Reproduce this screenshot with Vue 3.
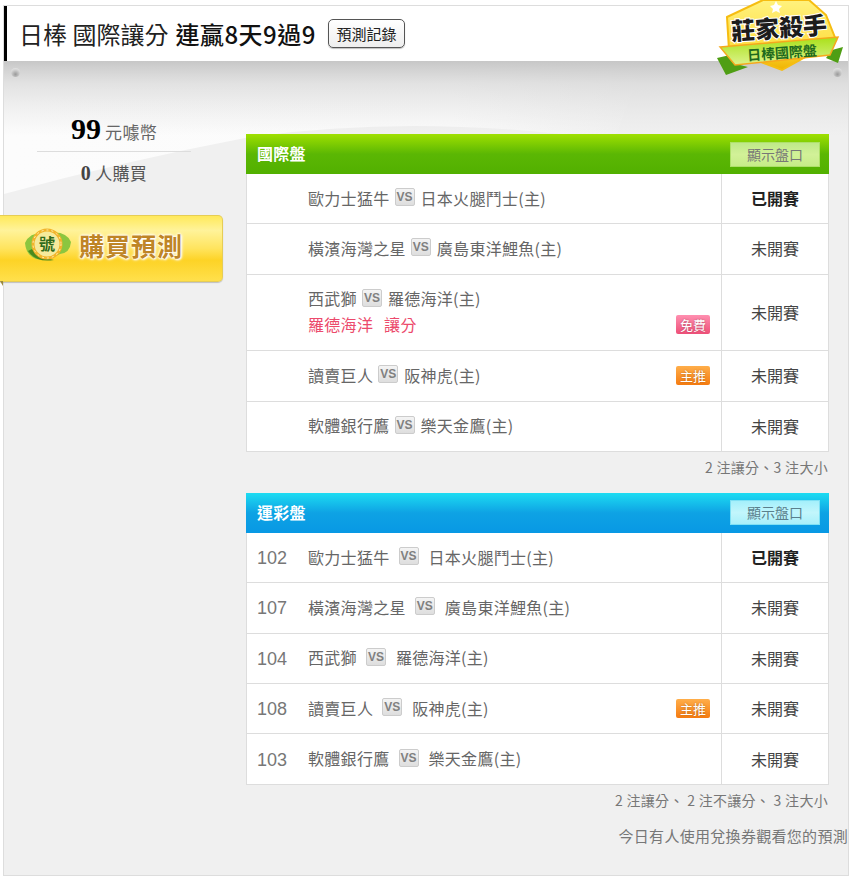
<template>
  <div class="page">
    <header class="top">
      <h1 class="top-title">
        <span>日棒 國際讓分</span>
        <strong>連贏8天9過9</strong>
        <button class="record-btn">預測記錄</button>
      </h1>
    </header>

    <!-- ranking ribbon hangs over the header edge -->
    <svg class="logo" width="130" height="76" viewBox="0 0 130 76">
      <defs>
        <linearGradient id="shield" x1="0" y1="0" x2="0" y2="1">
          <stop offset="0" stop-color="#fff27e" />
          <stop offset="0.6" stop-color="#ffe04a" />
          <stop offset="1" stop-color="#efb400" />
        </linearGradient>
        <linearGradient id="ribbon" x1="0" y1="0" x2="0" y2="1">
          <stop offset="0" stop-color="#a9e018" />
          <stop offset="1" stop-color="#dcf38c" />
        </linearGradient>
      </defs>
      <path d="M1 58 L14 55 L20 64 L32 67 L10 75 Z" fill="#4f9e14" />
      <path d="M116 50 L127 47 L122 63 L110 58 Z" fill="#4f9e14" />
      <path d="M11 17 L47 0 L93 0 L110 15 L120 40 L66 70 L13 50 Z" fill="url(#shield)" stroke="#f6bd12" stroke-width="2" />
      <path d="M60 1 L62 5 L66 6 L63 9 L64 13 L60 11 L56 13 L57 9 L54 6 L58 5 Z" fill="#fff" />
      <path d="M4 47 L122 37 L114 55 L19 65 Z" fill="url(#ribbon)" stroke="#f6a81c" stroke-width="1.5" />
      <text x="63" y="37" text-anchor="middle" class="logo-main" transform="rotate(-4 63 28)">莊家殺手</text>
      <text x="66" y="58" text-anchor="middle" class="logo-sub" transform="rotate(-4 66 53)">日棒國際盤</text>
    </svg>

    <div class="content">
      <svg class="content-bg" width="844" height="200" viewBox="0 0 844 200">
        <defs>
          <linearGradient id="sheen" x1="0" y1="0" x2="1" y2="0">
            <stop offset="0" stop-color="#fcfcfc" />
            <stop offset="0.7" stop-color="#fbfbfb" />
            <stop offset="1" stop-color="#f0f0f0" />
          </linearGradient>
          <linearGradient id="shade" x1="0" y1="0" x2="0" y2="1">
            <stop offset="0" stop-color="#c4c4c4" stop-opacity="0.95" />
            <stop offset="0.3" stop-color="#d4d4d4" stop-opacity="0.65" />
            <stop offset="1" stop-color="#e0e0e0" stop-opacity="0" />
          </linearGradient>
        </defs>
        <path d="M0 133 Q120 100 246 76 Q420 52 610 80 L640 0 L0 0 Z" fill="url(#sheen)" />
        <rect width="844" height="75" fill="url(#shade)" />
      </svg>

      <i class="pin pin-left"></i>
      <i class="pin pin-right"></i>

      <aside class="side">
        <div class="price"><b>99</b> 元噱幣</div>
        <div class="buyers"><b>0</b> 人購買</div>
        <a class="buy-btn">
          <svg class="buy-icon" width="48" height="36" viewBox="0 0 48 36">
            <path d="M1 16 Q6 4 24 6 Q42 3 47 15 Q46 26 36 27 Q24 34 12 32 Q2 28 1 16 Z" fill="#8cc63f" />
            <path d="M4 24 Q12 36 30 33 Q16 31 8 22 Z" fill="#4b8a1e" />
            <circle cx="23" cy="17" r="14" fill="#f5ea9c" stroke="#f2b42a" stroke-width="3" />
            <circle cx="23" cy="17" r="14" fill="none" stroke="#fff2b8" stroke-width="1" stroke-dasharray="2 3" />
            <text x="23" y="23" text-anchor="middle" class="buy-icon-text">號</text>
          </svg>
          <span class="buy-text">購買預測</span>
        </a>
      </aside>

      <main class="main">
        <section v-for="panel in panels" :key="panel.title" class="panel" :class="panel.tone">
          <div class="panel-head">
            <span class="panel-title">{{ panel.title }}</span>
            <span class="show-btn">顯示盤口</span>
          </div>
          <div class="rows">
            <div v-for="(row, i) in panel.rows" :key="i" class="row" :class="{ tall: row.pick }">
              <div class="game">
                <span class="game-no">{{ row.no }}</span>
                <div class="game-info">
                  <div class="teams">
                    <span>{{ row.away }}</span>
                    <span class="vs">VS</span>
                    <span>{{ row.home }}(主)</span>
                  </div>
                  <div v-if="row.pick" class="pick">{{ row.pick }}</div>
                </div>
                <span v-if="row.tag" class="tag" :class="row.tag === '免費' ? 'tag-free' : 'tag-main'">{{ row.tag }}</span>
              </div>
              <div class="status" :class="{ started: row.started }">{{ row.started ? '已開賽' : '未開賽' }}</div>
            </div>
          </div>
          <p class="panel-note">{{ panel.note }}</p>
        </section>
        <p class="voucher">今日有人使用兌換券觀看您的預測</p>
      </main>
    </div>
  </div>
</template>

<script setup>
const panels = [
  {
    title: '國際盤',
    tone: 'green',
    note: '2 注讓分、3 注大小',
    rows: [
      { no: '', away: '歐力士猛牛', home: '日本火腿鬥士', started: true },
      { no: '', away: '橫濱海灣之星', home: '廣島東洋鯉魚' },
      { no: '', away: '西武獅', home: '羅德海洋', pick: '羅德海洋 讓分', tag: '免費' },
      { no: '', away: '讀賣巨人', home: '阪神虎', tag: '主推' },
      { no: '', away: '軟體銀行鷹', home: '樂天金鷹' }
    ]
  },
  {
    title: '運彩盤',
    tone: 'blue',
    note: '2 注讓分、 2 注不讓分、 3 注大小',
    rows: [
      { no: '102', away: '歐力士猛牛', home: '日本火腿鬥士', started: true },
      { no: '107', away: '橫濱海灣之星', home: '廣島東洋鯉魚' },
      { no: '104', away: '西武獅', home: '羅德海洋' },
      { no: '108', away: '讀賣巨人', home: '阪神虎', tag: '主推' },
      { no: '103', away: '軟體銀行鷹', home: '樂天金鷹' }
    ]
  }
];
</script>

<style>
body {
  background: #fff;
}
</style>

<style scoped>
.page {
  position: relative;
  box-sizing: border-box;
  width: 846px;
  height: 871px;
  margin: 5px 0 0 3px;
  border: 1px solid #ddd;
  font-family: "Noto Sans CJK TC", "Liberation Sans", sans-serif;
  color: #666;
  background: #f0f0f0;
}
.top {
  box-sizing: border-box;
  height: 55px;
  border-left: 3px solid #000;
  background: #fff;
  display: flex;
  align-items: center;
  padding-left: 12px;
}
.top-title {
  margin: 0;
  display: flex;
  align-items: center;
  font-size: 24px;
  font-weight: 400;
  color: #222;
  white-space: pre;
}
.top-title strong {
  margin-left: 7px;
  font-size: 24px;
  font-weight: 500;
  letter-spacing: 0.5px;
  color: #111;
}
.record-btn {
  box-sizing: border-box;
  width: 77px;
  height: 29px;
  margin-left: 12px;
  padding: 0;
  border: 1px solid #555;
  border-radius: 5px;
  background: linear-gradient(#fff, #eee);
  font-family: inherit;
  font-size: 15px;
  line-height: 1;
  color: #222;
  box-shadow: 0 1px 1px rgba(0, 0, 0, 0.25);
}
.logo {
  position: absolute;
  top: -6px;
  left: 712px;
  z-index: 2;
}
.logo-main {
  font-size: 24px;
  font-weight: 900;
  fill: #1c1c1c;
  stroke: #fff;
  stroke-width: 2px;
  paint-order: stroke;
}
.logo-sub {
  font-size: 14px;
  font-weight: 700;
  fill: #1f6a1e;
}
.content {
  position: relative;
  display: flex;
  height: 814px;
  background: #f0f0f0;
}
.content-bg {
  position: absolute;
  top: 0;
  left: 0;
}
.pin {
  position: absolute;
  top: 7px;
  width: 9px;
  height: 9px;
  border-radius: 50%;
  background: radial-gradient(circle at 50% 70%, #9a9a9a, #d4d4d4 60%, #eee);
}
.pin-left {
  left: 7px;
}
.pin-right {
  right: 6px;
}
.side {
  position: relative;
  flex: none;
  width: 242px;
  padding-top: 53px;
  box-sizing: border-box;
}
.price {
  width: 154px;
  margin-left: 33px;
  height: 38px;
  box-sizing: border-box;
  border-bottom: 1px solid #ddd;
  text-align: center;
  font-size: 17px;
  letter-spacing: 0.3px;
  line-height: 30px;
}
.price b {
  font-family: "Liberation Serif", serif;
  font-size: 30px;
  letter-spacing: 0;
  color: #000;
}
.buyers {
  width: 154px;
  margin-left: 33px;
  padding-top: 8px;
  text-align: center;
  font-size: 17px;
  letter-spacing: 0.3px;
  line-height: 26px;
  color: #555;
}
.buyers b {
  font-family: "Liberation Serif", serif;
  font-size: 20px;
  color: #444;
}
.buy-btn {
  position: relative;
  display: flex;
  align-items: center;
  box-sizing: border-box;
  width: 223px;
  height: 67px;
  margin: 29px 0 0 -4px;
  padding: 0 0 7px 24px;
  border: 1px solid #e6cd55;
  border-left: 0;
  border-radius: 0 5px 5px 0;
  background: linear-gradient(#ffe95a, #fff39a 22%, #ffe45e 50%, #fdd326 68%, #ffe04c);
  box-shadow: 0 1px 1px rgba(0, 0, 0, 0.2);
}
.buy-btn::after {
  content: "";
  position: absolute;
  top: 100%;
  left: 0;
  border-top: 5px solid #9b8a3a;
  border-left: 3px solid transparent;
}
.buy-icon-text {
  font-size: 16px;
  font-weight: 700;
  fill: #2f6a1a;
}
.buy-text {
  margin-left: 7px;
  font-size: 25px;
  font-weight: 700;
  letter-spacing: 1px;
  color: #bf8526;
  text-shadow: 0 0 2px #fff, 0 0 3px #fff, 0 0 4px #fff, 1px 1px 2px #fff;
}
.main {
  position: relative;
  flex: none;
  width: 583px;
  padding-top: 73px;
}
.panel {
  margin-bottom: 16.1px;
}
.panel-head {
  display: flex;
  align-items: center;
  justify-content: space-between;
  height: 40px;
  padding: 0 9px 0 11px;
}
.green .panel-head {
  background: linear-gradient(#9fe000, #5bb704 50%, #52b000);
}
.blue .panel-head {
  background: linear-gradient(#1ddcf2, #0ea2e4 50%, #0898e4);
}
.panel-title {
  margin-bottom: 2px;
  font-size: 16px;
  font-weight: 700;
  letter-spacing: 0.3px;
  color: #fff;
}
.show-btn {
  box-sizing: border-box;
  width: 90px;
  height: 25px;
  text-align: center;
  font-size: 14px;
  line-height: 23px;
  color: #777;
}
.green .show-btn {
  border: 1px solid #aee06a;
  background: linear-gradient(#bfe98a, #d2f198 50%, #c6ec88);
}
.blue .show-btn {
  border: 1px solid #7fe0f4;
  background: linear-gradient(#a4f0fb, #c2f6fc 50%, #a9f0fa);
  color: #5a7f8c;
}
.rows {
  border-left: 1px solid #ddd;
  border-right: 1px solid #ddd;
  background: #fff;
}
.row {
  display: flex;
  box-sizing: border-box;
  height: 50.3px;
  border-bottom: 1px solid #ddd;
}
.row.tall {
  height: 76.7px;
}
.blue .row:last-child {
  height: 51px;
}
.game {
  flex: 1;
  display: flex;
  align-items: center;
  min-width: 0;
  padding: 0 11px 2px 0;
}
.game-no {
  flex: none;
  width: 61px;
  box-sizing: border-box;
  padding: 4px 0 0 10px;
  font-family: "Liberation Sans", sans-serif;
  font-size: 18px;
  color: #777;
}
.game-info {
  flex: 1;
}
.teams {
  display: flex;
  align-items: center;
  font-size: 16px;
  letter-spacing: 0.3px;
  color: #666;
}
.vs {
  flex: none;
  box-sizing: border-box;
  width: 20px;
  height: 18px;
  margin: 0 6px 1px 5px;
  border: 1px solid #ccc;
  border-radius: 2px;
  background: linear-gradient(#f4f4f4, #dedede);
  text-align: center;
  font-family: "Liberation Sans", sans-serif;
  font-size: 12px;
  font-weight: 700;
  letter-spacing: 0;
  line-height: 16px;
  color: #808080;
}
.blue .vs {
  margin: 0 10px 1px 9px;
}
.pick {
  margin-top: 2px;
  font-size: 16px;
  letter-spacing: 0.3px;
  word-spacing: 7px;
  color: #ec4a6c;
}
.tag {
  flex: none;
  align-self: center;
  box-sizing: border-box;
  width: 34px;
  height: 19px;
  margin-top: 2px;
  border-radius: 2px;
  text-align: center;
  font-size: 13px;
  line-height: 19px;
  color: #fff;
  text-shadow: 0 0 2px rgba(0, 0, 0, 0.3);
}
.tall .tag {
  align-self: flex-end;
  margin-bottom: 14px;
}
.tag-free {
  background: linear-gradient(#ff8fb0, #ee4f78);
}
.tag-main {
  background: linear-gradient(#ffae4a, #f57b10);
}
.status {
  flex: none;
  width: 106px;
  display: flex;
  align-items: center;
  justify-content: center;
  box-sizing: content-box;
  padding-bottom: 1px;
  border-left: 1px solid #ddd;
  font-size: 16px;
  color: #444;
}
.status.started {
  font-weight: 700;
  color: #222;
}
.panel-note {
  margin: 5px 0 0;
  text-align: right;
  font-size: 14px;
  line-height: 20px;
  letter-spacing: 0.3px;
  padding-right: 1px;
  color: #777;
}
.voucher {
  margin: 1px -19px 0 0;
  text-align: right;
  font-size: 15px;
  line-height: 20px;
  letter-spacing: 0.3px;
  color: #777;
}
</style>
